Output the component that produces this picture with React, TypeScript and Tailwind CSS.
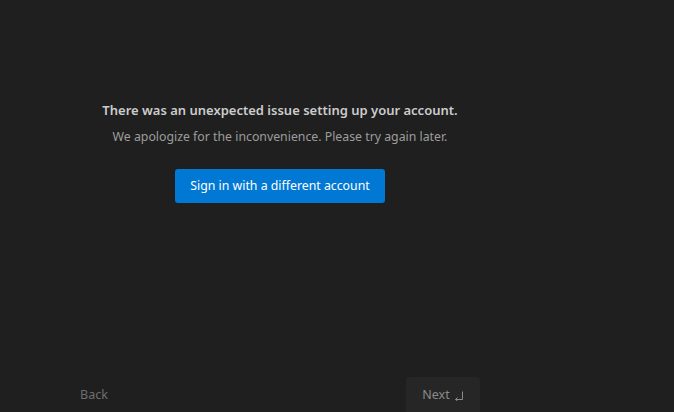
export default function App() {
  return (
    <div className="w-[674px] h-[412px] bg-[#1f1f1f] overflow-hidden flex" style={{ fontFamily: '"Noto Sans", "Open Sans", sans-serif' }}>
      <div className="w-[400px] ml-[80px] flex flex-col">
        <div className="flex flex-col items-center pt-[100px]">
          <div className="text-[13px] font-semibold text-[#cccccc] leading-[20px]">There was an unexpected issue setting up your account.</div>
          <div className="text-[12.3px] text-[#9d9d9d] leading-[20px] mt-[7px]">We apologize for the inconvenience. Please try again later.</div>
          <button className="mt-[22px] w-[210px] h-[34px] rounded-[3px] bg-[#0078d4] text-white text-[12.3px]">Sign in with a different account</button>
        </div>
        <div className="mt-auto mb-[-2px] flex items-center justify-between h-[37px]">
          <span className="text-[12.5px] text-[#6e6e6e]">Back</span>
          <div className="w-[74px] h-[37px] rounded-[3px] bg-[#262626] flex items-center justify-center gap-[4px] text-[12.5px] text-[#8a8a8a]">
            <span>Next</span>
            <svg width="10" height="10" viewBox="0 0 10 10" fill="none" stroke="#8a8a8a" strokeWidth="1" className="mt-[1px]">
              <path d="M8.5 0.5 V8.5 H1.5" />
              <path d="M3.5 6.5 L1.5 8.5 L3.5 10" />
            </svg>
          </div>
        </div>
      </div>
    </div>
  );
}
